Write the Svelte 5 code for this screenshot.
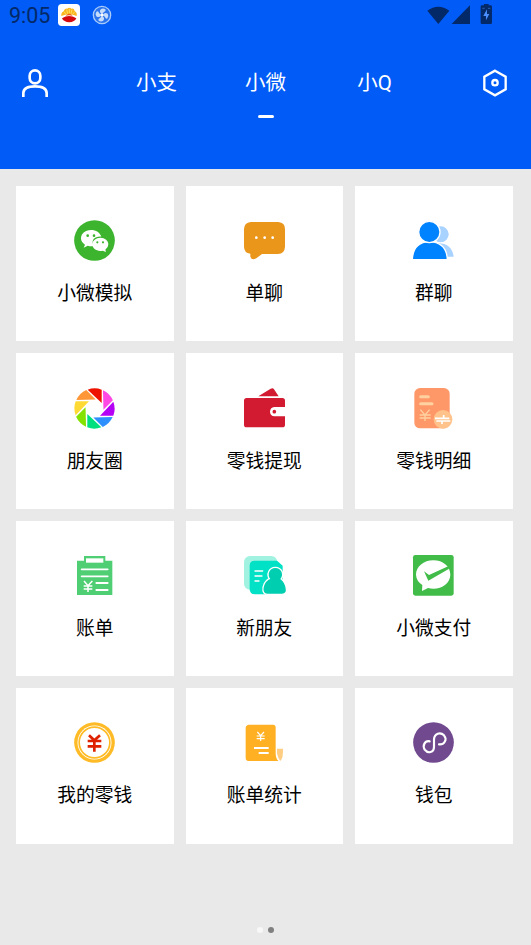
<script>
  const tabs = ['小支', '小微', '小Q'];
  const items = [
    ['wechat', '小微模拟'], ['chat', '单聊'], ['group', '群聊'],
    ['moments', '朋友圈'], ['withdraw', '零钱提现'], ['detail', '零钱明细'],
    ['bill', '账单'], ['friend', '新朋友'], ['pay', '小微支付'],
    ['coin', '我的零钱'], ['stats', '账单统计'], ['wallet', '钱包']
  ];
  const blades = ['#ee1200', '#ff48e4', '#b400f4', '#2e90ff', '#00df80', '#83e200', '#ffda35', '#ff9738'];
</script>

<div class="screen">
  <header>
    <div class="status">
      <span class="time">9:05</span>
      <svg class="app" viewBox="0 0 66 66">
        <rect width="66" height="66" rx="11" fill="#fff" />
        <path d="M10 36Q9 25 17 22Q20 12 28 14Q34 8 40 14Q48 12 50 21Q58 26 56 36Q34 26 10 36Z" fill="#f9b51b" />
        <path d="M24 31L18 23M29 29L26 17M34 28V15M39 29L42 17M44 31L50 23" stroke="#fff08a" stroke-width="2" />
        <path d="M12 43Q33 29 55 43Q50 54 34 55Q17 54 12 43Z" fill="#d40910" />
        <path d="M23 36Q34 23 44 36Q34 32 23 36Z" fill="#ef5b14" />
      </svg>
      <svg class="fan" viewBox="0 0 60 60">
        <circle cx="30" cy="30" r="26" fill="#2b74ee" stroke="#a9cbfa" stroke-width="4" />
        {#each [0, 90, 180, 270] as a}
          <path d="M29 28Q18 23 23 14Q29 8 37 12Q40 17 34 20Q31 23 31 28Z" fill="#c6dcfb" transform="rotate({a + 12} 30 30)" />
        {/each}
        <circle cx="30" cy="30" r="4" fill="#fff" />
      </svg>
      <svg class="signals" viewBox="0 0 202 66" fill="#032968">
        <path d="M4 26Q37 3 70 26L37 66Z" />
        <path d="M77 66L132 10V66Z" />
        <path d="M168 10H174V6H188V10H194Q198 10 198 14V62Q198 66 194 66H168Q164 66 164 62V14Q164 10 168 10Z" />
        <path d="M183 22L172 42H180V55L190 36H183Z" fill="#4b8fff" />
        <path d="M169 19H176M186 19H193" stroke="#3f79d9" stroke-width="2" />
      </svg>
    </div>
    <div class="nav">
      <svg class="user" viewBox="0 0 78 84" fill="none" stroke="#fff" stroke-width="8">
        <rect x="23" y="4" width="32" height="39" rx="16" />
        <path d="M4 84V72Q5 52 39 52Q73 52 74 72V84" />
      </svg>
      <div class="tabs">
        {#each tabs as tab, i}
          <div class="tab" class:active={i === 1}><span>{tab}</span></div>
        {/each}
      </div>
      <svg class="settings" viewBox="0 0 72 84" fill="none" stroke="#fff">
        <path d="M36 5L68 23V61L36 79L4 61V23Z" stroke-width="7" />
        <circle cx="36" cy="41" r="8" stroke-width="7" />
      </svg>
    </div>
  </header>

  <main>
    {#each items as [icon, label]}
      <div class="card">
        <svg class="icon" viewBox="0 0 123 123">
          {#if icon === 'wechat'}
            <circle cx="61.5" cy="61.5" r="61" fill="#3cb42e" />
            <path d="M51 30C33 30 21 41 21 55Q21 67 33 74L29 83L41 77Q51 80 59 78C49 60 64 48 82 50C78 38 66 30 51 30Z" fill="#fff" />
            <path d="M79 53C93 53 103 62 103 73Q103 83 94 89L96 96L86 92C69 96 55 86 55 73C55 62 66 53 79 53Z" fill="#fff" />
            <g fill="#3cb42e"><circle cx="41" cy="47" r="4" /><circle cx="60" cy="47" r="4" /><circle cx="70" cy="67" r="3.3" /><circle cx="87" cy="67" r="3.3" /></g>
          {:else if icon === 'chat'}
            <path d="M20 6H103Q123 8 123 27V80Q122 101 102 102H54L37 115Q23 122 19 110V101Q0 98 0 80V27Q1 8 20 6Z" fill="#ea961b" />
            <g fill="#fff"><circle cx="37" cy="53" r="4" /><circle cx="62" cy="53" r="4" /><circle cx="86" cy="53" r="4" /></g>
          {:else if icon === 'group'}
            <g fill="#a8d2ff"><circle cx="83" cy="43" r="24" /><path d="M70 70Q116 67 122 110H85Z" /></g>
            <path d="M-2 119Q0 67 49 65Q101 67 103 119Z" fill="#0083ff" stroke="#fff" stroke-width="4" />
            <circle cx="49" cy="36" r="32" fill="#0083ff" stroke="#fff" stroke-width="4" />
            <rect x="-3" y="117" width="112" height="6" fill="#fff" />
          {:else if icon === 'moments'}
            {#each blades as color, i}
              <path d="M41 5A60 60 0 0 1 83 5V45Z" fill={color} transform="rotate({i * 45} 61.5 61.5)" />
            {/each}
          {:else if icon === 'withdraw'}
            <path d="M43 25L80 2Q87-2 90 4L104 25Z" fill="#d21a30" />
            <path d="M8 30H115Q123 30 123 38V57H91Q79 58 78 71Q79 84 91 85H123V110Q123 118 115 118H8Q0 118 0 110V38Q0 30 8 30Z" fill="#d21a30" />
            <circle cx="91" cy="71" r="5.5" fill="#d21a30" />
          {:else if icon === 'detail'}
            <rect x="4" y="0" width="106" height="121" rx="17" fill="#ff9868" />
            <path d="M23 26H46M23 47H57" stroke="#ffd1a0" stroke-width="9" stroke-linecap="round" />
            <path d="M22 65L36 81L50 65M36 81V99M20 81H53M20 90H53" fill="none" stroke="#ffd1a0" stroke-width="4" />
            <circle cx="90" cy="94" r="28" fill="#ffc28b" />
            <path d="M66 91H109M92 91V81M70 99H112M87 99V108" fill="none" stroke="#fff" stroke-width="5" />
          {:else if icon === 'bill'}
            <path d="M9 17H30V3H94V17H115V120H9Z" fill="#50ce74" />
            <path d="M36 10H88V23H36Z" fill="#fff" />
            <path d="M23 43H101M23 64H101M67 84H101M67 105H101" stroke="#fff" stroke-width="5.5" stroke-linecap="round" />
            <path d="M30 78L42 92L55 78M42 92V111M29 93H55M29 102H55" fill="none" stroke="#fff" stroke-width="4.5" />
          {:else if icon === 'friend'}
            <rect x="0" y="3" width="100" height="101" rx="18" fill="#a1f2e0" />
            <path d="M32 17H99L116 32V118H33Q17 118 17 102V32Q17 17 32 17Z" fill="#00e1c5" />
            <path d="M33 48H56M33 63H54M33 78H45" stroke="#fff" stroke-width="4" stroke-linecap="round" />
            <path d="M94 39C77 39 68 59 79 72C64 77 57 95 59 107Q61 116 71 116H114Q128 115 125 101Q123 83 109 72C121 59 111 39 94 39Z" fill="#00ceb0" stroke="#fff" stroke-width="8" paint-order="stroke" />
          {:else if icon === 'pay'}
            <rect x="0" y="0" width="122" height="122" rx="7" fill="#42bc49" />
            <path d="M61 16C32 16 9 35 9 59Q10 78 28 90L27 108L45 99C79 108 112 87 112 59C112 35 91 16 61 16Z" fill="#fff" />
            <path d="M33 49L48 60L112 31L107 42L46 77Z" fill="#42bc49" />
          {:else if icon === 'coin'}
            <circle cx="61.5" cy="61.5" r="61" fill="#ffbb25" />
            <circle cx="61.5" cy="61.5" r="51" fill="#fff" />
            <circle cx="61.5" cy="61.5" r="46" fill="#fff" stroke="#ffbb25" stroke-width="5" />
            <path d="M45 40L61 55L78 40M61 55V89M41 57H82M41 73H82" fill="none" stroke="#de2200" stroke-width="8" />
          {:else if icon === 'stats'}
            <path d="M15 8H87Q95 8 95 16V94Q95 109 103 117H13Q5 116 5 108V17Q6 9 15 8Z" fill="#ffb023" />
            <path d="M99 80H117Q118 108 109 117Q102 110 99 94Z" fill="#ffce83" />
            <path d="M40 30L50 41L60 30M50 41V57M38 42H62M38 50H62" fill="none" stroke="#fff" stroke-width="3.5" />
            <path d="M30 78H74M44 93H74" stroke="#fff" stroke-width="6" />
          {:else}
            <circle cx="61.5" cy="61.5" r="61" fill="#70498f" />
            <path d="M50 58C35 55 28 71 35 83C45 96 63 92 63 74V52C64 34 82 29 93 40C104 53 93 69 78 67" fill="none" stroke="#fff" stroke-width="6.5" stroke-linecap="round" />
          {/if}
        </svg>
        <span>{label}</span>
      </div>
    {/each}
  </main>

  <footer><i></i><i class="current"></i></footer>
</div>

<style>
  :global(body) { margin: 0; }
  .screen {
    width: 531px;
    height: 945px;
    display: flex;
    flex-direction: column;
    background: #e9e9e9;
    font-family: Roboto, "Noto Sans CJK SC", sans-serif;
    overflow: hidden;
  }
  svg { display: block; overflow: visible; flex: none; }
  header { height: 169px; flex: none; background: #005bf7; }
  .status { height: 32px; display: flex; align-items: flex-start; box-sizing: border-box; padding: 4px 38px 0 9px; }
  .time { width: 49px; font-size: 21.5px; line-height: 24px; color: #032968; }
  .app { width: 22px; height: 22px; }
  .fan { width: 20px; height: 20px; margin: 1px 0 0 12px; }
  .signals { width: 67.3px; height: 22px; margin: -2px 0 0 auto; }
  .nav { height: 90px; display: flex; align-items: flex-start; justify-content: space-between; box-sizing: border-box; padding: 37px 24px 0 22px; }
  .user { width: 26px; height: 28px; }
  .settings { width: 24px; height: 28px; }
  .tabs { display: flex; }
  .tab { width: 109px; height: 50px; display: flex; flex-direction: column; align-items: center; color: #fff; font-size: 20.5px; line-height: 28px; font-weight: 400; }
  .tab.active::after { content: ""; width: 16px; height: 3px; margin-top: 18px; border-radius: 1.5px; background: #fff; }
  main { display: grid; grid-template-columns: repeat(3, 157.5px); grid-auto-rows: 155.4px; gap: 12px; padding: 17px 16px 0; }
  .card { display: flex; flex-direction: column; align-items: center; box-sizing: border-box; padding-top: 34.3px; background: #fff; color: #000; }
  .icon { width: 41px; height: 41px; }
  .card span { margin-top: 19px; font-size: 18.75px; line-height: 28px; white-space: nowrap; }
  footer { display: flex; justify-content: center; gap: 5px; margin-top: auto; padding-bottom: 12px; }
  i { width: 6px; height: 6px; border-radius: 50%; background: #f8f8f8; }
  .current { background: #808080; }
</style>
